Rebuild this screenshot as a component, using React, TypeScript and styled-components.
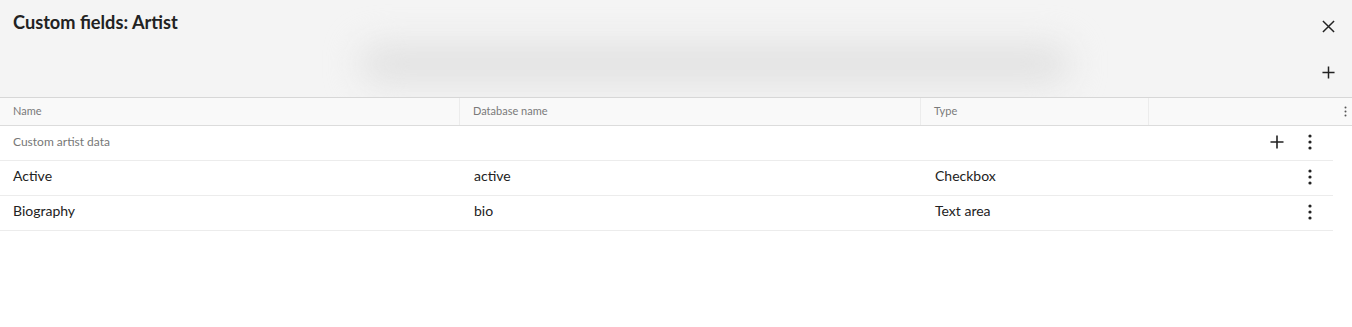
import React from 'react';
import styled, { createGlobalStyle } from 'styled-components';

const GlobalStyle = createGlobalStyle`
  html, body {
    margin: 0;
    padding: 0;
    background: #fff;
    font-family: Lato, "Liberation Sans", sans-serif;
    color: #222;
  }
`;

const Page = styled.div`
  width: 1352px;
  height: 327px;
  overflow: hidden;
  background: #fff;
`;

const Header = styled.div`
  position: relative;
  display: flex;
  justify-content: space-between;
  height: 97px;
  background: #f4f4f4;
  border-bottom: 1px solid #d7d7d7;
  overflow: hidden;
`;

const Title = styled.h1`
  margin: 0;
  padding: 11px 13px;
  font-size: 18.2px;
  font-weight: 700;
  color: #222;
`;

const Blur = styled.div`
  position: absolute;
  left: 360px;
  top: 45px;
  width: 710px;
  height: 38px;
  border-radius: 20px;
  background: #e1e1e1;
  filter: blur(17px);
`;

const HeaderActions = styled.div`
  display: flex;
  flex-direction: column;
  align-items: center;
  justify-content: space-between;
  padding: 17px 15px 16px 0;
  position: relative;
`;

const IconButton = styled.button`
  display: flex;
  align-items: center;
  justify-content: center;
  width: 18px;
  height: 18px;
  padding: 0;
  border: 0;
  background: none;
  color: #222;
`;

const Row = styled.div<{ $head?: boolean }>`
  display: grid;
  grid-template-columns: 459px 461px 229px 1fr;
  align-items: center;
  height: ${(p) => (p.$head ? '27px' : '34px')};
  width: ${(p) => (p.$head ? '1352px' : '1333px')};
  background: ${(p) => (p.$head ? '#f9f9f9' : '#fff')};
  border-bottom: 1px solid ${(p) => (p.$head ? '#dcdcdc' : '#ececec')};
`;

const HeadCell = styled.div<{ $sep?: boolean }>`
  height: 100%;
  box-sizing: border-box;
  display: flex;
  align-items: center;
  padding: 0 0 2px 13px;
  font-size: 11px;
  color: #7a7a7a;
  border-left: ${(p) => (p.$sep ? '1px solid #ececec' : 'none')};
`;

const Cell = styled.div<{ $muted?: boolean }>`
  padding: 0 0 ${(p) => (p.$muted ? '4px' : '6px')} 15px;
  font-size: ${(p) => (p.$muted ? '12px' : '14px')};
  color: ${(p) => (p.$muted ? '#777' : '#222')};

  &:first-child {
    padding-left: 13px;
  }
`;

const Actions = styled.div`
  display: flex;
  justify-content: flex-end;
  align-items: center;
  gap: 15px;
  padding: 0 14px 2px 0;
`;

const HeadMenu = styled.div`
  display: flex;
  justify-content: flex-end;
  padding-right: 5px;
  height: 100%;
  align-items: center;
  border-left: 1px solid #ececec;
  margin-left: -1px;
`;

const Plus = ({ size = 13 }: { size?: number }) => (
  <svg width={size} height={size} viewBox="0 0 14 14">
    <path d="M7 0.5v13M0.5 7h13" stroke="#222" strokeWidth="1.6" fill="none" />
  </svg>
);

const Close = () => (
  <svg width="13" height="13" viewBox="0 0 14 14">
    <path d="M1 1l12 12M13 1L1 13" stroke="#222" strokeWidth="1.6" fill="none" />
  </svg>
);

const Dots = ({ small }: { small?: boolean }) =>
  small ? (
    <svg width="3" height="11" viewBox="0 0 3 11">
      <circle cx="1.5" cy="1.5" r="1" fill="#555" />
      <circle cx="1.5" cy="5.5" r="1" fill="#555" />
      <circle cx="1.5" cy="9.5" r="1" fill="#555" />
    </svg>
  ) : (
    <svg width="4" height="16" viewBox="0 0 4 16">
      <circle cx="2" cy="2" r="1.6" fill="#222" />
      <circle cx="2" cy="8" r="1.6" fill="#222" />
      <circle cx="2" cy="14" r="1.6" fill="#222" />
    </svg>
  );

const fields = [
  { name: 'Active', db: 'active', type: 'Checkbox' },
  { name: 'Biography', db: 'bio', type: 'Text area' },
];

export default function App() {
  return (
    <Page>
      <GlobalStyle />
      <Header>
        <Title>Custom fields: Artist</Title>
        <Blur />
        <HeaderActions>
          <IconButton aria-label="Close">
            <Close />
          </IconButton>
          <IconButton aria-label="Add">
            <Plus />
          </IconButton>
        </HeaderActions>
      </Header>
      <Row $head>
        <HeadCell>Name</HeadCell>
        <HeadCell $sep>Database name</HeadCell>
        <HeadCell $sep>Type</HeadCell>
        <HeadMenu>
          <Dots small />
        </HeadMenu>
      </Row>
      <Row>
        <Cell $muted>Custom artist data</Cell>
        <div />
        <div />
        <Actions>
          <IconButton aria-label="Add field">
            <Plus size={14} />
          </IconButton>
          <IconButton aria-label="More">
            <Dots />
          </IconButton>
        </Actions>
      </Row>
      {fields.map((f) => (
        <Row key={f.db}>
          <Cell>{f.name}</Cell>
          <Cell>{f.db}</Cell>
          <Cell>{f.type}</Cell>
          <Actions>
            <IconButton aria-label="More">
              <Dots />
            </IconButton>
          </Actions>
        </Row>
      ))}
    </Page>
  );
}
